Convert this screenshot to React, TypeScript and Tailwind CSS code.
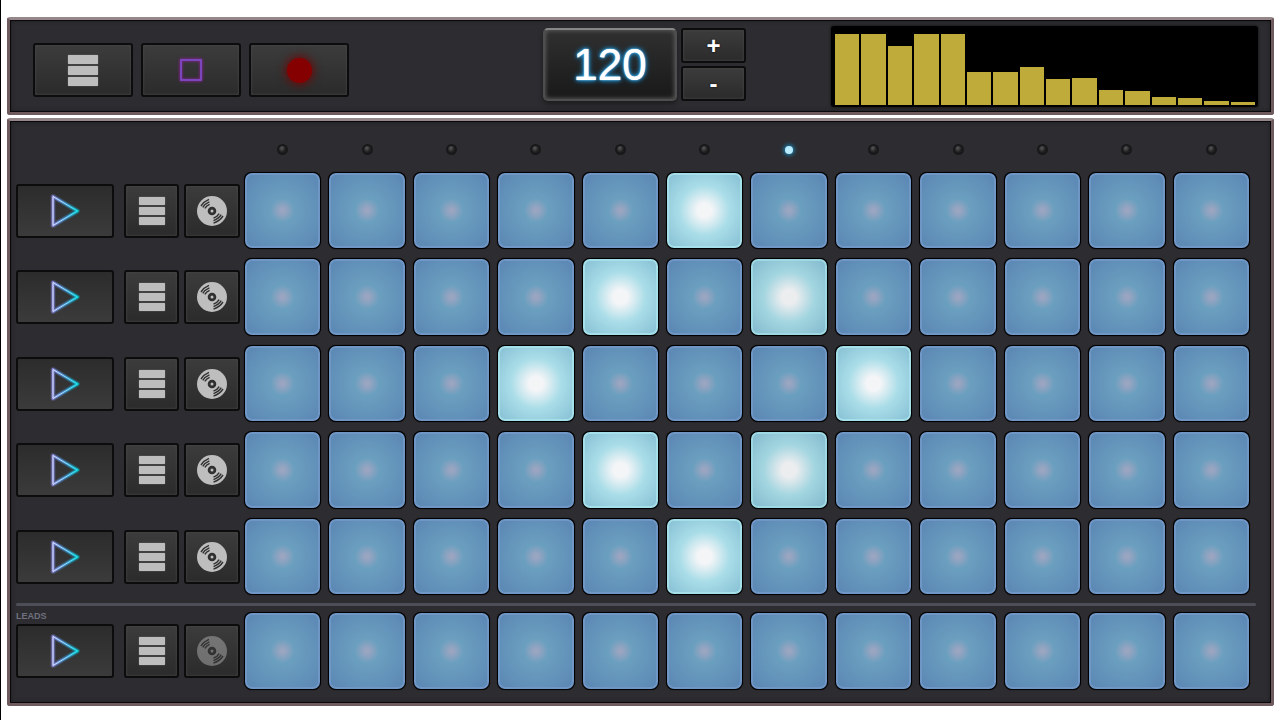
import { useState } from "react";

const STEPS = 12;
const PLAYHEAD = 6;

const TRACKS = [
  { name: "Track 1", steps: [5], label: "", loaded: true },
  { name: "Track 2", steps: [4, 6], label: "", loaded: true },
  { name: "Track 3", steps: [3, 7], label: "", loaded: true },
  { name: "Track 4", steps: [4, 6], label: "", loaded: true },
  { name: "Track 5", steps: [5], label: "", loaded: true },
];

const LEADS = { name: "Leads", steps: [] as number[], label: "LEADS", loaded: false };

const LEVELS = [71, 71, 59, 71, 71, 33, 33, 38, 26, 27, 15, 14, 8, 7, 4, 3];

const PANEL =
  "rounded-[3px] border-3 border-t-[#95868a] border-x-[#6f5b5e] border-b-[#6f5b5e] bg-[#2d2d31] shadow-[inset_0_0_0_1px_#09090b,inset_0_0_5px_#18181b]";

const KEY =
  "flex items-center justify-center rounded-[3px] border-2 border-[#0c0c0d] bg-linear-to-b from-[#3c3c3c] to-[#2b2b2b] shadow-[inset_0_0_3px_#4a4a4a]";

function MenuIcon({ className }: { className: string }) {
  return (
    <span className={`flex flex-col gap-[2px] ${className}`}>
      <span className="flex-1 rounded-[1px] bg-[#bdbdbd] shadow-[0_0_1px_#bdbdbd]" />
      <span className="flex-1 rounded-[1px] bg-[#bdbdbd] shadow-[0_0_1px_#bdbdbd]" />
      <span className="flex-1 rounded-[1px] bg-[#bdbdbd] shadow-[0_0_1px_#bdbdbd]" />
    </span>
  );
}

function PlayIcon() {
  return (
    <svg width="36" height="40" viewBox="0 0 36 40" fill="none">
      <defs>
        <linearGradient id="neon" x1="5" y1="0" x2="31" y2="0" gradientUnits="userSpaceOnUse">
          <stop offset="0" stopColor="#8f8cf0" />
          <stop offset="0.5" stopColor="#3f98dc" />
          <stop offset="1" stopColor="#00c8d8" />
        </linearGradient>
        <linearGradient id="core" x1="5" y1="0" x2="31" y2="0" gradientUnits="userSpaceOnUse">
          <stop offset="0" stopColor="#e4e6ff" />
          <stop offset="0.6" stopColor="#8fdcf6" />
          <stop offset="1" stopColor="#1ceaf0" />
        </linearGradient>
      </defs>
      <path d="M6 5.500L30.500 20L6 34.500Z" stroke="url(#neon)" strokeWidth="5" strokeLinejoin="round" opacity="0.25" />
      <path d="M6 5.500L30.500 20L6 34.500Z" stroke="url(#neon)" strokeWidth="2.800" strokeLinejoin="round" opacity="0.8" />
      <path d="M6 5.500L30.500 20L6 34.500Z" stroke="url(#core)" strokeWidth="1" strokeLinejoin="round" />
    </svg>
  );
}

function DiscIcon({ dim }: { dim: boolean }) {
  return (
    <svg width="30" height="30" viewBox="0 0 30 30" fill="none" className={dim ? "opacity-45" : ""}>
      <circle cx="15" cy="15" r="15" fill="#bebebe" />
      <circle cx="15" cy="15" r="2.900" fill="#bebebe" stroke="#303030" strokeWidth="2.800" />
      <g stroke="#303030" strokeWidth="1.400">
        <path d="M4 10C5.800 7.200 8.300 4.900 12 3.400" />
        <path d="M5.800 11.400C7.200 9 9.300 7 12.400 5.800" />
        <path d="M7.800 12.400C9 10.400 10.400 9.200 12.600 8.300" />
        <path d="M26 20C24.200 22.800 21.700 25.100 16.500 27.200" />
        <path d="M24.200 18.600C22.800 21 20.700 23 16.500 24.600" />
        <path d="M22.200 17.600C21 19.600 19.600 20.800 16.500 22.200" />
      </g>
    </svg>
  );
}

function Transport() {
  return (
    <div className="flex gap-2 pt-[17px]">
      <button aria-label="Menu" className={`${KEY} h-[54px] w-[100px]`}>
        <MenuIcon className="h-[31px] w-[30px]" />
      </button>
      <button aria-label="Stop" className={`${KEY} h-[54px] w-[100px]`}>
        <span className="size-[22px] border-2 border-[#7a46bc] shadow-[0_0_3px_#a01aa8,inset_0_0_3px_#a01aa8]" />
      </button>
      <button aria-label="Record" className={`${KEY} h-[54px] w-[100px]`}>
        <span className="size-[25px] rounded-full bg-[#850000] shadow-[0_0_8px_2px_#6a0c0c]" />
      </button>
    </div>
  );
}

function Tempo() {
  const [bpm, setBpm] = useState(120);
  const key = `${KEY} h-[35px] w-[65px] text-white text-2xl leading-none font-bold [text-shadow:0_0_2px_#000]`;
  return (
    <div className="mr-[85px] ml-auto flex gap-1 pt-[2px] font-['Liberation_Sans',sans-serif]">
      <div className="flex h-[73px] w-[134px] items-center justify-center rounded-[5px] border-2 border-[#4d4e4e] border-t-[#858686] bg-linear-to-b from-[#303030] to-[#191919] shadow-[inset_0_0_5px_#6a6a6a,0_3px_5px_#1c1c1f]">
        <output className="text-[44px] leading-none text-white [text-shadow:0_0_1px_#fff,0_0_2px_#2aa9ee,0_0_4px_#2aa9ee,0_0_6px_#1583c4]">
          {bpm}
        </output>
      </div>
      <div className="flex flex-col gap-[3px]">
        <button aria-label="Faster" className={key} onClick={() => setBpm(bpm + 1)}>
          +
        </button>
        <button aria-label="Slower" className={key} onClick={() => setBpm(bpm - 1)}>
          -
        </button>
      </div>
    </div>
  );
}

function Spectrum() {
  return (
    <div className="flex h-[81px] w-[427px] items-end gap-[2px] rounded-[3px] bg-black pr-[3px] pb-[2px] pl-1 shadow-[0_0_2px_1px_#1c1c1e]">
      {LEVELS.map((level, i) => (
        <div key={i} className="flex-1 bg-[#bfab3a]" style={{ height: level }} />
      ))}
    </div>
  );
}

function Led({ on }: { on: boolean }) {
  return (
    <span className="flex h-[11px] items-center justify-center">
      {on ? (
        <span className="size-2 rounded-full bg-[#b9ecff] shadow-[0_0_4px_1px_#1591c9]" />
      ) : (
        <span className="size-[11px] rounded-full border-2 border-[#18181a] bg-radial-[at_40%_30%] from-[#58585a] to-[#1f1f20] to-60%" />
      )}
    </span>
  );
}

function Pad({ on, playing, label, onClick }: { on: boolean; playing: boolean; label: string; onClick: () => void }) {
  const look = on
    ? "border-[#a4dfea] from-[#f4f5f7] from-14% via-[#a9dde8] via-50% to-[#88c1d5]"
    : "border-[#7096c6] from-[#9aa5c1] from-4% via-[#6b9fbf] via-24% to-[#5b87b4]";
  return (
    <button
      aria-label={label}
      aria-pressed={on}
      onClick={onClick}
      className="aspect-square rounded-lg bg-black p-[1px] shadow-[0_0_1px_#000]"
    >
      <span
        className={`block size-full rounded-[7px] border-2 bg-radial-[circle_at_center] ${look} ${on && playing ? "opacity-97" : ""}`}
      />
    </button>
  );
}

function Track({ name, steps, label, loaded }: typeof LEADS) {
  const [active, setActive] = useState(steps);
  const toggle = (i: number) =>
    setActive(active.includes(i) ? active.filter((s) => s !== i) : [...active, i]);

  return (
    <div className="flex pr-[6px]">
      <div className="w-[228px] shrink-0">
        <div className="h-3 font-['Liberation_Sans',sans-serif] text-[9px] leading-[9px] font-bold text-[#70707e]">
          {label}
        </div>
        <div className="flex">
          <button
            aria-label={`Play ${name}`}
            className="flex h-[54px] w-[98px] items-center justify-center rounded-[3px] border-2 border-[#0c0c0d] bg-linear-to-b from-[#2c2c2c] to-[#3b3b3b]"
          >
            <PlayIcon />
          </button>
          <button aria-label={`${name} menu`} className={`${KEY} ml-[10px] h-[54px] w-[55px]`}>
            <MenuIcon className="h-[28px] w-[26px]" />
          </button>
          <button aria-label={`${name} sample`} className={`${KEY} ml-[5px] h-[54px] w-[56px]`}>
            <DiscIcon dim={!loaded} />
          </button>
        </div>
      </div>
      <div className="grid flex-1 grid-cols-12 gap-[7px]">
        {Array.from({ length: STEPS }, (_, i) => (
          <Pad
            key={i}
            label={`${name} step ${i + 1}`}
            on={active.includes(i)}
            playing={i === PLAYHEAD}
            onClick={() => toggle(i)}
          />
        ))}
      </div>
    </div>
  );
}

export default function App() {
  return (
    <div className="flex min-h-screen flex-col items-stretch gap-[3px] border-l border-black bg-white px-[6px] pt-[17px] pb-2">
      <header className={`${PANEL} flex items-start pt-[6px] pr-[13px] pb-[5px] pl-[23px]`}>
        <Transport />
        <Tempo />
        <Spectrum />
      </header>

      <main className={`${PANEL} pt-[23px] pr-[15px] pb-[13px] pl-[6px]`}>
        <div className="grid grid-cols-12 gap-[7px] pr-[6px] pl-[228px]">
          {Array.from({ length: STEPS }, (_, i) => (
            <Led key={i} on={i === PLAYHEAD} />
          ))}
        </div>
        <div className="mt-[17px] flex flex-col gap-[9px]">
          {TRACKS.map((track) => (
            <Track key={track.name} {...track} />
          ))}
        </div>
        <hr className="mt-2 mb-[6px] h-[3px] rounded-full border-0 bg-[#4e4e58]" />
        <Track {...LEADS} />
      </main>
    </div>
  );
}
